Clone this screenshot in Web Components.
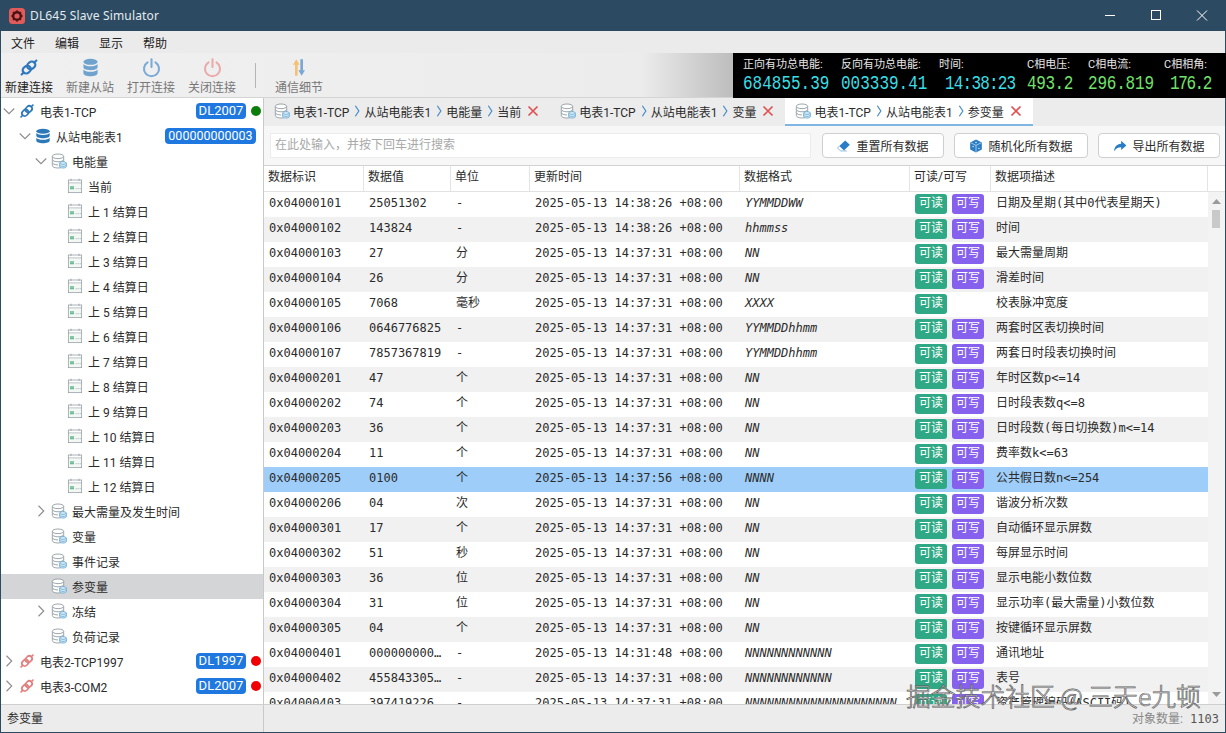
<!DOCTYPE html>
<html lang="zh">
<head>
<meta charset="utf-8">
<title>DL645 Slave Simulator</title>
<style>
    html, body { margin: 0; height: 100%; overflow: hidden; }
    body { font: 12px Roboto, "Noto Sans CJK SC", sans-serif; color: #222; }
</style>
</head>
<body>
<app-window>
    <title-bar slot="title">DL645 Slave Simulator</title-bar>
    <menu-bar slot="menu"></menu-bar>
    <tool-bar slot="tools"></tool-bar>
    <nav-tree slot="tree">
        <tree-row level="0" arrow="down" icon="link" badge="DL2007" dot="#0b7d0b">电表1-TCP</tree-row>
        <tree-row level="1" arrow="down" icon="db" badge="000000000003" wide>从站电能表1</tree-row>
        <tree-row level="2" arrow="down" icon="dbo">电能量</tree-row>
        <tree-row level="3" icon="cal">当前</tree-row>
        <tree-row level="3" icon="cal">上 1 结算日</tree-row>
        <tree-row level="3" icon="cal">上 2 结算日</tree-row>
        <tree-row level="3" icon="cal">上 3 结算日</tree-row>
        <tree-row level="3" icon="cal">上 4 结算日</tree-row>
        <tree-row level="3" icon="cal">上 5 结算日</tree-row>
        <tree-row level="3" icon="cal">上 6 结算日</tree-row>
        <tree-row level="3" icon="cal">上 7 结算日</tree-row>
        <tree-row level="3" icon="cal">上 8 结算日</tree-row>
        <tree-row level="3" icon="cal">上 9 结算日</tree-row>
        <tree-row level="3" icon="cal">上 10 结算日</tree-row>
        <tree-row level="3" icon="cal">上 11 结算日</tree-row>
        <tree-row level="3" icon="cal">上 12 结算日</tree-row>
        <tree-row level="2" arrow="right" icon="dbo">最大需量及发生时间</tree-row>
        <tree-row level="2" icon="dbo">变量</tree-row>
        <tree-row level="2" icon="dbo">事件记录</tree-row>
        <tree-row level="2" icon="dbo" selected>参变量</tree-row>
        <tree-row level="2" arrow="right" icon="dbo">冻结</tree-row>
        <tree-row level="2" icon="dbo">负荷记录</tree-row>
        <tree-row level="0" arrow="right" icon="linkoff" badge="DL1997" dot="#f00000">电表2-TCP1997</tree-row>
        <tree-row level="0" arrow="right" icon="linkoff" badge="DL2007" dot="#f00000">电表3-COM2</tree-row>
    </nav-tree>
    <tab-strip slot="tabs">
        <tab-item path="电表1-TCP|从站电能表1|电能量|当前"></tab-item>
        <tab-item path="电表1-TCP|从站电能表1|变量"></tab-item>
        <tab-item path="电表1-TCP|从站电能表1|参变量" active></tab-item>
    </tab-strip>
    <search-bar slot="search"></search-bar>
    <data-table slot="table"></data-table>
    <status-bar slot="status"></status-bar>
</app-window>
<water-mark>掘金技术社区 @ 三天e九顿</water-mark>

<script>
// Icons are all drawn on a 24x24 box
const dbOutline = `
    <g fill="#fff" stroke="#8d989f" stroke-width="1.3">
        <path d="M2 5v14c0 2 4 3.5 8.5 3.5S19 21 19 19V5"/>
        <path d="M2 9.7c0 2 4 3.5 8.5 3.5S19 11.7 19 9.7M2 14.4c0 2 4 3.5 8.5 3.5"/>
        <ellipse cx="10.5" cy="5" rx="8.5" ry="3.5"/>
    </g>
    <g fill="#e4f1fa" stroke="#5ba3d0" stroke-width="1.2">
        <path d="M13 15v5.5c0 1.200 2.300 2 5 2s5-.8 5-2V15"/>
        <path d="M13 18c0 1.200 2.300 2 5 2s5-.8 5-2"/>
        <ellipse cx="18" cy="15" rx="5" ry="2"/>
    </g>`;

const chain = (c) => `
    <g fill="none" stroke="${c}" stroke-width="2.6" stroke-linecap="round" transform="rotate(-45 12 12)">
        <rect x="3" y="7.8" width="10.500" height="8.400" rx="4.200"/>
        <rect x="10.500" y="7.8" width="10.500" height="8.400" rx="4.200"/>
        <path d="M-.5 12H3M21 12h3.500"/>
    </g>`;

const slabs = (c) => `
    <g fill="${c}">
        <ellipse cx="12" cy="4.800" rx="10" ry="3.800"/>
        <path d="M2 7.500c1.500 2 5.500 3 10 3s8.500-1 10-3v4.300c0 2.100-4.500 3.700-10 3.700S2 13.900 2 11.800z"/>
        <path d="M2 14.500c1.500 2 5.500 3 10 3s8.500-1 10-3v4.700c0 2.100-4.500 3.800-10 3.800S2 21.300 2 19.200z"/>
    </g>`;

const power = (c) => `
    <g fill="none" stroke="${c}" stroke-width="2.6" stroke-linecap="round">
        <path d="M7 5.500a9.500 9.500 0 1 0 10 0"/>
        <path d="M12 1.500v10"/>
    </g>`;

const ICONS = {
    link: chain('#2f78bd'),
    linkoff: chain('#e27f7f'),
    db: slabs('#2c78b8'),
    dbsoft: slabs('#6fa3cd'),
    dbo: dbOutline,
    cal: `
        <g fill="#fff" stroke="#8d989f" stroke-width="1.100">
            <rect x="2" y="3" width="20" height="19"/>
            <path d="M2 7.500h20M6 1v3.500M18 1v3.500"/>
        </g>
        <rect x="3" y="8.500" width="18" height="12.500" fill="#f3f8f5"/>
        <path d="M6 12v5M9 12v5M4.500 13.500h6M4.500 16h6" stroke="#3ea777" stroke-width="1.100"/>
        <path d="M13 16h1.500M16 16h1.500M19 16h1.500" stroke="#8d989f" stroke-width="1.100"/>`,
    poweron: power('#7aaad9'),
    poweroff: power('#eaaaaa'),
    comms: `
        <path d="M8 1.500l5 7h-3v14H6v-14H3z" fill="#f5c078"/>
        <path d="M16 22.500l5-7h-3v-14h-4v14h-3z" fill="#7ba7d4"/>`,
    erase: `
        <path d="M14 2.500l8 7.500-10 9.500-8-7.500z" fill="#2a7dc4"/>
        <path d="M4 12l-3 3.500 5 5h11" fill="none" stroke="#7aaad9" stroke-width="1.400"/>`,
    cube: `
        <path d="M12 1l10 5v12l-10 5-10-5V6z" fill="#2a7dc4"/>
        <path d="M3 6.500l9 4.500 9-4.500M12 11v11" fill="none" stroke="#d5e7f6" stroke-width="1.200"/>
        <circle cx="7" cy="13" r="1.200" fill="#fff"/><circle cx="17" cy="16" r="1.200" fill="#fff"/>
        <circle cx="12" cy="6" r="1.200" fill="#fff"/>`,
    share: `
        <path d="M14 3l9 8-9 8v-5C8 14 5 16 2 21c0-7 4-12.500 12-13z" fill="#2a7dc4"/>`,
    close: `
        <path d="M3 3l18 18M21 3L3 21" fill="none" stroke="#e05252" stroke-width="3.400"/>`,
    down: `<path d="M1.500 7l10.500 10.500L22.500 7" fill="none" stroke="#8c8c8c" stroke-width="2.200"/>`,
    right: `<path d="M7 1.500L17.500 12 7 22.500" fill="none" stroke="#8c8c8c" stroke-width="2.200"/>`,
    crumb: `<path d="M7 1.500L17.500 12 7 22.500" fill="none" stroke="#4a90c8" stroke-width="3.200"/>`,
};

class AppIcon extends HTMLElement {
    connectedCallback() {
        const size = this.getAttribute('size') || 16;
        const h = this.getAttribute('height') || size;
        this.attachShadow({ mode: 'open' }).innerHTML = `
            <style>:host { display: inline-flex; flex: none; } svg { display: block; overflow: visible; }</style>
            <svg width="${size}" height="${h}" viewBox="0 0 24 24" preserveAspectRatio="none">${ICONS[this.getAttribute('name')]}</svg>`;
    }
}
customElements.define('app-icon', AppIcon);

class AppWindow extends HTMLElement {
    constructor() {
        super();
        this.attachShadow({ mode: 'open' }).innerHTML = `
            <style>
                :host {
                    display: flex; flex-direction: column; box-sizing: border-box;
                    width: 1226px; height: 733px;
                    border: 1px solid #2c4a62; border-top: 0;
                    background: #fff;
                }
                .body { flex: 1; min-height: 0; display: flex; }
                .side { width: 262px; flex: none; border-right: 1px solid #c9c9c9; display: flex; }
                .main { flex: 1; min-width: 0; display: flex; flex-direction: column; }
                ::slotted([slot=tree]) { flex: 1; }
                ::slotted([slot=table]) { flex: 1; min-height: 0; }
            </style>
            <slot name="title"></slot>
            <slot name="menu"></slot>
            <slot name="tools"></slot>
            <div class="body">
                <div class="side"><slot name="tree"></slot></div>
                <div class="main">
                    <slot name="tabs"></slot>
                    <slot name="search"></slot>
                    <slot name="table"></slot>
                </div>
            </div>
            <slot name="status"></slot>`;
    }
}
customElements.define('app-window', AppWindow);

class TitleBar extends HTMLElement {
    constructor() {
        super();
        this.attachShadow({ mode: 'open' }).innerHTML = `
            <style>
                :host {
                    display: flex; align-items: center; height: 31px; flex: none;
                    margin: 0 -1px; padding-left: 9px;
                    background: #2c4a62; color: #e4eaef;
                    font: 12px "Noto Sans", sans-serif; letter-spacing: .15px;
                }
                .logo { margin-right: 5px; }
                .name { flex: 1; }
                .ctl { display: flex; }
                .ctl svg { display: block; width: 46px; height: 31px; }
            </style>
            <svg class="logo" width="16" height="16" viewBox="0 0 16 16">
                <rect width="16" height="16" rx="3.500" fill="#e25b5b"/>
                <circle cx="8" cy="8" r="3.800" fill="none" stroke="#4a1414" stroke-width="2.400"/>
                <path d="M8 2.300v2M8 11.700v2M2.300 8h2M11.700 8h2M4 4l1.400 1.400M10.600 10.600L12 12M12 4l-1.400 1.400M5.400 10.600L4 12" stroke="#4a1414" stroke-width="1.400"/>
            </svg>
            <span class="name"><slot></slot></span>
            <div class="ctl">
                <svg viewBox="0 0 46 31"><path d="M18 15.500h10" stroke="#fff"/></svg>
                <svg viewBox="0 0 46 31"><rect x="18.500" y="10.500" width="9" height="9" fill="none" stroke="#fff"/></svg>
                <svg viewBox="0 0 46 31" style="margin-right:1px"><path d="M18 10.500l10 10M28 10.500l-10 10" stroke="#fff"/></svg>
            </div>`;
    }
}
customElements.define('title-bar', TitleBar);

class MenuBar extends HTMLElement {
    constructor() {
        super();
        this.attachShadow({ mode: 'open' }).innerHTML = `
            <style>
                :host {
                    display: flex; gap: 20px; align-items: center; flex: none;
                    height: 22px; padding-left: 10px; background: #ebebeb; color: #222;
                }
            </style>
            <span>文件</span><span>编辑</span><span>显示</span><span>帮助</span>`;
    }
}
customElements.define('menu-bar', MenuBar);

class ToolButton extends HTMLElement {
    connectedCallback() {
        const on = this.hasAttribute('enabled');
        const w = this.getAttribute('w') || 20;
        this.attachShadow({ mode: 'open' }).innerHTML = `
            <style>
                :host {
                    display: flex; flex-direction: column; align-items: center;
                    width: 48px; color: ${on ? '#222' : '#777'};
                }
                .ic { height: 20px; margin: 4px 0 3px; display: flex; align-items: center; }
                span { white-space: nowrap; line-height: 16px; }
            </style>
            <div class="ic"><app-icon name="${this.getAttribute('icon')}" size="${w}" height="19"></app-icon></div>
            <span>${this.getAttribute('label')}</span>`;
    }
}
customElements.define('tool-button', ToolButton);

class LcdPanel extends HTMLElement {
    constructor() {
        super();
        // label, value, colour class, column width, value indent, value letter spacing
        const cols = [
            ['正向有功总电能:', '684855.39', 'c', 98, 0, 0],
            ['反向有功总电能:', '003339.41', 'c', 98, 0, 0],
            ['时间:', '14:38:23', 'c', 88, 6, -.8],
            ['C相电压:', '493.2', 'g', 61, 0, -.4],
            ['C相电流:', '296.819', 'g', 76, 0, -.2],
            ['C相相角:', '176.2', 'g', 60, 6, -1.4],
        ];
        this.attachShadow({ mode: 'open' }).innerHTML = `
            <style>
                :host {
                    display: flex; flex: none; width: 493px; height: 45px; box-sizing: border-box;
                    padding: 4px 0 0 10px; background: #000; color: #e8e8e8;
                }
                .col { display: flex; flex-direction: column; }
                .lbl { white-space: nowrap; line-height: 15px; font-size: 11px; }
                .val {
                    font: 16px/20px "Liberation Mono", monospace;
                    transform: scaleY(1.3); transform-origin: 0 50%; margin-top: 2px;
                    white-space: nowrap;
                }
                .c { color: #39dfe6; }
                .g { color: #72e36c; }
            </style>
            ${cols.map(([l, v, c, w, p, s]) => `
                <div class="col" style="width:${w}px">
                    <span class="lbl">${l}</span>
                    <span class="val ${c}" style="padding-left:${p}px;letter-spacing:${s}px">${v}</span>
                </div>`).join('')}`;
    }
}
customElements.define('lcd-panel', LcdPanel);

class ToolBar extends HTMLElement {
    constructor() {
        super();
        this.attachShadow({ mode: 'open' }).innerHTML = `
            <style>
                :host {
                    display: flex; flex: none; height: 45px; box-sizing: border-box;
                    background: linear-gradient(to right, #f0f0f0 0, #ececec 640px, #bdbdbd 732px);
                    border-bottom: 1px solid #d4d4d4;
                }
                .btns { flex: 1; display: flex; padding-left: 4px; gap: 13px; }
                .sep { width: 1px; height: 25px; margin: 10px 6px 0 6px; background: #b5b5b5; }
                lcd-panel { margin-right: -1px; }
            </style>
            <div class="btns">
                <tool-button enabled icon="link" label="新建连接"></tool-button>
                <tool-button icon="dbsoft" w="17" label="新建从站"></tool-button>
                <tool-button icon="poweron" w="19" label="打开连接"></tool-button>
                <tool-button icon="poweroff" w="19" label="关闭连接"></tool-button>
                <div class="sep"></div>
                <tool-button icon="comms" w="16" label="通信细节"></tool-button>
            </div>
            <lcd-panel></lcd-panel>`;
    }
}
customElements.define('tool-bar', ToolBar);

class NavTree extends HTMLElement {
    constructor() {
        super();
        this.attachShadow({ mode: 'open' }).innerHTML = `
            <style>
                :host { display: block; padding-top: 1px; background: #fff; overflow: hidden; }
            </style>
            <slot></slot>`;
    }
}
customElements.define('nav-tree', NavTree);

class TreeRow extends HTMLElement {
    connectedCallback() {
        const level = +this.getAttribute('level');
        const arrow = this.getAttribute('arrow');
        const badge = this.getAttribute('badge');
        const dot = this.getAttribute('dot');
        const wide = this.hasAttribute('wide');
        this.attachShadow({ mode: 'open' }).innerHTML = `
            <style>
                :host {
                    display: flex; align-items: center; height: 25px; box-sizing: border-box;
                    padding-left: ${2 + level * 16}px; padding-bottom: 1px; color: #2b2b2b;
                }
                :host([selected]) { background: #d4d5d6; }
                .arr { width: 12px; margin-right: 4px; height: 12px; }
                .ic { margin-right: 5px; }
                .txt { flex: 1; white-space: nowrap; }
                .badge {
                    background: #1f78e0; color: #fff; border-radius: 4px; white-space: nowrap;
                    height: 16px; line-height: 16px; text-align: center;
                    width: ${wide ? 91 : 50}px; font-size: ${wide ? 12.5 : 13}px;
                    margin-right: ${wide ? 7 : 5}px;
                }
                .dot { width: 10px; height: 10px; border-radius: 50%; margin-right: 2px; }
            </style>
            <div class="arr">${arrow ? `<app-icon name="${arrow}" size="12"></app-icon>` : ''}</div>
            <app-icon class="ic" name="${this.getAttribute('icon')}" size="16"></app-icon>
            <span class="txt"><slot></slot></span>
            ${badge ? `<span class="badge">${badge}</span>` : ''}
            ${dot ? `<span class="dot" style="background:${dot}"></span>` : ''}`;
    }
}
customElements.define('tree-row', TreeRow);

class TabStrip extends HTMLElement {
    constructor() {
        super();
        this.attachShadow({ mode: 'open' }).innerHTML = `
            <style>
                :host { display: flex; flex: none; height: 28px; background: #ececec; }
            </style>
            <slot></slot>`;
    }
}
customElements.define('tab-strip', TabStrip);

class TabItem extends HTMLElement {
    connectedCallback() {
        const parts = this.getAttribute('path').split('|');
        this.attachShadow({ mode: 'open' }).innerHTML = `
            <style>
                :host {
                    display: flex; align-items: center; box-sizing: border-box; height: 28px;
                    padding: 0 11px 0 10px; color: #2b2b2b; white-space: nowrap;
                    border-bottom: 2px solid transparent;
                }
                :host([active]) { background: #fff; border-bottom-color: #82b6e2; }
                .ic { margin-right: 3px; }
                .cr { margin: 0 3px 0 4px; }
                .x { margin-left: 6px; }
            </style>
            <app-icon class="ic" name="dbo" size="16"></app-icon>
            ${parts.map((p, i) => `${i ? '<app-icon class="cr" name="crumb" size="8" height="12"></app-icon>' : ''}<span>${p}</span>`).join('')}
            <app-icon class="x" name="close" size="12"></app-icon>`;
    }
}
customElements.define('tab-item', TabItem);

class SearchBar extends HTMLElement {
    constructor() {
        super();
        this.attachShadow({ mode: 'open' }).innerHTML = `
            <style>
                :host {
                    display: flex; flex: none; gap: 10px; height: 39px; box-sizing: border-box;
                    padding: 7px 5px 7px 6px; background: #f7f7f7; font-size: 12px;
                }
                .input {
                    flex: 1; box-sizing: border-box; border: 1px solid #ececec; background: #fff;
                    padding-left: 4px; line-height: 23px; color: #a8a8a8; margin-right: 1px;
                }
                .btn {
                    display: flex; align-items: center; justify-content: center; gap: 5px;
                    box-sizing: border-box; border: 1px solid #cfcfcf; border-radius: 4px;
                    background: #fff; color: #2b2b2b; white-space: nowrap;
                }
            </style>
            <div class="input">在此处输入，并按下回车进行搜索</div>
            <div class="btn" style="width:122px"><app-icon name="erase" size="14"></app-icon>重置所有数据</div>
            <div class="btn" style="width:134px"><app-icon name="cube" size="14"></app-icon>随机化所有数据</div>
            <div class="btn" style="width:122px"><app-icon name="share" size="14"></app-icon>导出所有数据</div>`;
    }
}
customElements.define('search-bar', SearchBar);

const T1 = '2025-05-13 14:38:26 +08:00';
const T2 = '2025-05-13 14:37:31 +08:00';
const ROWS = [
    ['0x04000101', '25051302', '-', T1, 'YYMMDDWW', 2, '日期及星期(其中0代表星期天)'],
    ['0x04000102', '143824', '-', T1, 'hhmmss', 2, '时间'],
    ['0x04000103', '27', '分', T2, 'NN', 2, '最大需量周期'],
    ['0x04000104', '26', '分', T2, 'NN', 2, '滑差时间'],
    ['0x04000105', '7068', '毫秒', T2, 'XXXX', 1, '校表脉冲宽度'],
    ['0x04000106', '0646776825', '-', T2, 'YYMMDDhhmm', 2, '两套时区表切换时间'],
    ['0x04000107', '7857367819', '-', T2, 'YYMMDDhhmm', 2, '两套日时段表切换时间'],
    ['0x04000201', '47', '个', T2, 'NN', 2, '年时区数p<=14'],
    ['0x04000202', '74', '个', T2, 'NN', 2, '日时段表数q<=8'],
    ['0x04000203', '36', '个', T2, 'NN', 2, '日时段数(每日切换数)m<=14'],
    ['0x04000204', '11', '个', T2, 'NN', 2, '费率数k<=63'],
    ['0x04000205', '0100', '个', '2025-05-13 14:37:56 +08:00', 'NNNN', 2, '公共假日数n<=254', true],
    ['0x04000206', '04', '次', T2, 'NN', 2, '谐波分析次数'],
    ['0x04000301', '17', '个', T2, 'NN', 2, '自动循环显示屏数'],
    ['0x04000302', '51', '秒', T2, 'NN', 2, '每屏显示时间'],
    ['0x04000303', '36', '位', T2, 'NN', 2, '显示电能小数位数'],
    ['0x04000304', '31', '位', T2, 'NN', 2, '显示功率(最大需量)小数位数'],
    ['0x04000305', '04', '个', T2, 'NN', 2, '按键循环显示屏数'],
    ['0x04000401', '000000000…', '-', '2025-05-13 14:31:48 +08:00', 'NNNNNNNNNNNN', 2, '通讯地址'],
    ['0x04000402', '455843305…', '-', T2, 'NNNNNNNNNNNN', 2, '表号'],
    ['0x04000403', '397419226…', '-', T2, 'NNNNNNNNNNNNNNNNNNNNN', 2, '资产管理编码(ASCII码)'],
];

class DataTable extends HTMLElement {
    constructor() {
        super();
        const heads = ['数据标识', '数据值', '单位', '更新时间', '数据格式', '可读/可写', '数据项描述', ''];
        this.attachShadow({ mode: 'open' }).innerHTML = `
            <style>
                :host {
                    display: flex; flex-direction: column; overflow: hidden; position: relative;
                    font: 12px "DejaVu Sans Mono", "Noto Sans CJK SC", monospace; color: #2b2b2b;
                    --cols: 100px 87px 79px 210px 170px 81px 217px;
                }
                .head {
                    display: grid; grid-template-columns: var(--cols) 17px; flex: none;
                    height: 27px; box-sizing: border-box; background: #fff;
                    border-top: 1px solid #d2d2d2; border-bottom: 1px solid #e2e2e2;
                }
                .head div {
                    padding-left: 4px; line-height: 22px; border-right: 1px solid #e4e4e4;
                    font-family: Roboto, "Noto Sans CJK SC", sans-serif;
                }
                .head div:last-child { border-right: 0; }
                .body { flex: 1; min-height: 0; display: flex; }
                .rows { width: 944px; flex: none; overflow: hidden; }
                .row {
                    display: grid; grid-template-columns: var(--cols); height: 25px;
                    align-items: start; white-space: nowrap;
                }
                .row:nth-child(even) { background: #f1f1f1; }
                .row.sel { background: #9fcdf9; }
                .row > span { padding: 3px 0 0 5px; line-height: 16px; height: 16px; overflow: hidden; }
                .fmt { font-style: italic; }
                .perm { display: flex; gap: 5px; padding: 2px 0 0 5px; }
                .perm b {
                    width: 32px; height: 20px; line-height: 19px; border-radius: 3px; text-align: center;
                    font-weight: 400; font-family: Roboto, "Noto Sans CJK SC", sans-serif; color: #fff;
                }
                .r { background: #2fa985; }
                .w { background: #8561ee; }
                .bar { flex: 1; position: relative; background: #f3f3f3; }
                .bar i { position: absolute; left: 4px; top: 18px; width: 8px; height: 18px; background: #c9c9c9; }
                .bar svg { position: absolute; left: 4px; width: 9px; height: 5px; }
            </style>
            <div class="head">${heads.map((h) => `<div>${h}</div>`).join('')}</div>
            <div class="body">
                <div class="rows">
                    ${ROWS.map((r) => `
                        <div class="row${r[7] ? ' sel' : ''}">
                            <span>${r[0]}</span><span>${r[1]}</span><span>${r[2]}</span>
                            <span>${r[3]}</span><span class="fmt">${r[4]}</span>
                            <div class="perm"><b class="r">可读</b>${r[5] > 1 ? '<b class="w">可写</b>' : ''}</div>
                            <span>${r[6].replace(/</g, '&lt;')}</span>
                        </div>`).join('')}
                </div>
                <div class="bar">
                    <svg viewBox="0 0 9 5" style="top:7px"><path d="M4.500 0L9 5H0z" fill="#9a9a9a"/></svg>
                    <i></i>
                    <svg viewBox="0 0 9 5" style="bottom:7px"><path d="M4.500 5L9 0H0z" fill="#9a9a9a"/></svg>
                </div>
            </div>`;
    }
}
customElements.define('data-table', DataTable);

class StatusBar extends HTMLElement {
    constructor() {
        super();
        this.attachShadow({ mode: 'open' }).innerHTML = `
            <style>
                :host {
                    display: flex; flex: none; height: 28px; box-sizing: border-box;
                    background: #ececec; border-top: 1px solid #cfcfcf; line-height: 29px;
                }
                .l { width: 256px; padding-left: 6px; border-right: 1px solid #c9c9c9; color: #2b2b2b; }
                .r { flex: 1; text-align: right; padding-right: 6px; color: #888; white-space: pre; }
                .r b { font: 400 12px "DejaVu Sans Mono", monospace; color: #555; }
            </style>
            <div class="l">参变量</div>
            <div class="r">对象数量:<b> 1103</b></div>`;
    }
}
customElements.define('status-bar', StatusBar);

// The site watermark sits over the bottom right corner of the table
class WaterMark extends HTMLElement {
    constructor() {
        super();
        this.attachShadow({ mode: 'open' }).innerHTML = `
            <style>
                :host {
                    position: absolute; left: 906px; top: 680px; white-space: nowrap;
                    font: 300 24.800px/30px "Noto Sans CJK SC", sans-serif;
                    color: rgba(255, 255, 255, .8);
                    -webkit-text-stroke: .7px #5c5c5c;
                }
            </style>
            <slot></slot>`;
    }
}
customElements.define('water-mark', WaterMark);
</script>
</body>
</html>
